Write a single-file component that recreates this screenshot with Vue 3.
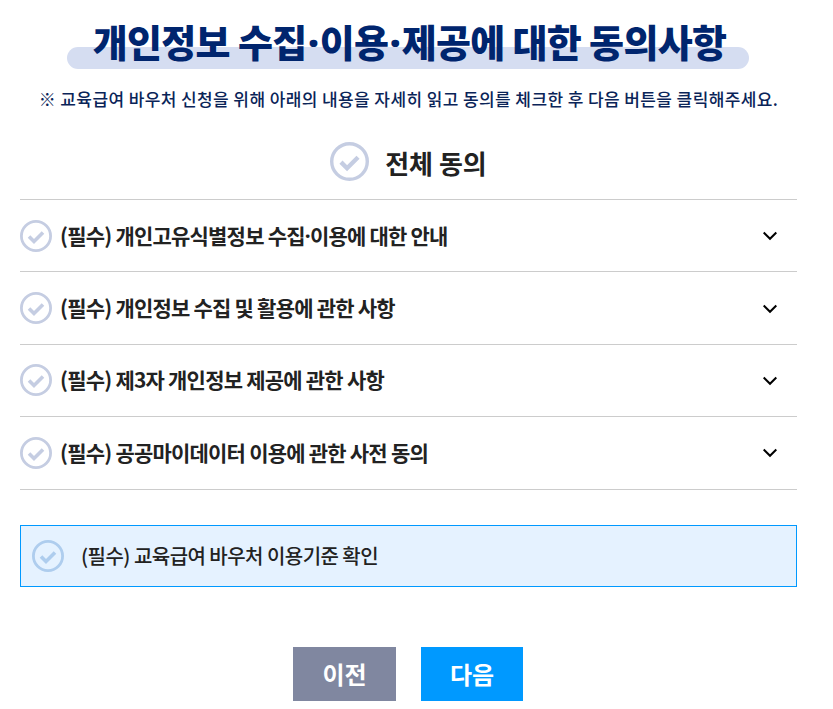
<template>
  <div class="page">
    <div class="head">
      <h1 class="title">
        <span class="title-text">개인정보 수집<i class="dot">·</i>이용<i class="dot">·</i>제공에 대한 동의사항</span>
      </h1>
      <p class="notice">※ 교육급여 바우처 신청을 위해 아래의 내용을 자세히 읽고 동의를 체크한 후 다음 버튼을 클릭해주세요.</p>
    </div>

    <div class="all-agree">
      <svg class="check check-all" viewBox="0 0 32 32">
        <circle cx="16" cy="16" r="14.6" fill="none" stroke="#c5cde2" stroke-width="2.8" />
        <path d="M9 16.5l5 5 9-9" fill="none" stroke="#c5cde2" stroke-width="3.6" />
      </svg>
      <span class="all-text">전체 동의</span>
    </div>

    <ul class="terms">
      <li v-for="item in terms" :key="item.text" class="term">
        <svg class="check" viewBox="0 0 32 32">
          <circle cx="16" cy="16" r="14.6" fill="none" stroke="#c5cde2" stroke-width="2.8" />
          <path d="M9 16.5l5 5 9-9" fill="none" stroke="#c5cde2" stroke-width="3.6" />
        </svg>
        <span class="term-text">{{ item.text }}<template v-if="item.rest"><i class="dot">·</i>{{ item.rest }}</template></span>
        <svg class="arrow" viewBox="0 0 14 10">
          <path d="M.7 1.5l6.3 6.3 6.3-6.3" fill="none" stroke="#000" stroke-width="2" />
        </svg>
      </li>
    </ul>

    <div class="confirm">
      <svg class="check" viewBox="0 0 32 32">
        <circle cx="16" cy="16" r="14.6" fill="none" stroke="#aecdee" stroke-width="2.8" />
        <path d="M9 16.5l5 5 9-9" fill="none" stroke="#aecdee" stroke-width="3.6" />
      </svg>
      <span class="confirm-text">(필수) 교육급여 바우처 이용기준 확인</span>
    </div>

    <div class="buttons">
      <button class="btn prev">이전</button>
      <button class="btn next">다음</button>
    </div>
  </div>
</template>

<script setup>
const terms = [
  { text: '(필수) 개인고유식별정보 수집', rest: '이용에 대한 안내' },
  { text: '(필수) 개인정보 수집 및 활용에 관한 사항' },
  { text: '(필수) 제3자 개인정보 제공에 관한 사항' },
  { text: '(필수) 공공마이데이터 이용에 관한 사전 동의' }
]
</script>

<style>
html, body {
  background: #fff;
}
</style>

<style scoped>
.page {
  width: 777px;
  margin-left: 20px;
  font-family: "Noto Sans CJK KR", "Noto Sans", sans-serif;
  color: #222;
}

.head {
  text-align: center;
}

.title {
  position: relative;
  margin: 0 0 0 47px;
  width: 682px;
  height: 69px;
  font-size: 38px;
  font-weight: 900;
  line-height: 40px;
  padding: 21px 0 0 3px;
  box-sizing: border-box;
  color: #00256e;
  letter-spacing: -0.68px;
  white-space: nowrap;
}

/* highlight bar behind the title */
.title::before {
  content: "";
  position: absolute;
  left: 0;
  right: 0;
  top: 47px;
  height: 22px;
  border-radius: 11px;
  background: #d5ddf1;
}

.title-text {
  position: relative;
}

.dot {
  font-style: normal;
  font-family: "Noto Sans", sans-serif;
}

.title .dot {
  margin: 0 1.5px;
}

.notice {
  margin: 18px 0 0;
  font-size: 17px;
  font-weight: 500;
  line-height: 24px;
  letter-spacing: 0.4px;
  color: #0a2458;
  white-space: nowrap;
}

.all-agree {
  display: flex;
  align-items: center;
  justify-content: center;
  gap: 16px;
  height: 89px;
  padding-top: 12px;
  font-size: 26px;
  font-weight: 700;
  border-bottom: 1px solid #ccc;
  box-sizing: border-box;
}

.all-text {
  margin-top: 3px;
}

.check {
  width: 32px;
  height: 32px;
  flex: none;
}

.check-all {
  width: 39px;
  height: 39px;
}

.terms {
  list-style: none;
  margin: 0;
  padding: 0;
}

.term {
  display: flex;
  align-items: center;
  gap: 8px;
  height: 72.4px;
  box-sizing: border-box;
  border-bottom: 1px solid #ccc;
  font-size: 21px;
  font-weight: 700;
  letter-spacing: -0.78px;
}

.term-text {
  flex: 1;
  margin-top: -2px;
}

.arrow {
  width: 14px;
  height: 10px;
  margin: 1px 20px 0 0;
}

.confirm {
  display: flex;
  align-items: center;
  gap: 17px;
  height: 62px;
  margin-top: 35.4px;
  padding-left: 11px;
  box-sizing: border-box;
  border: 1px solid #0099ff;
  background: #e5f2ff;
  font-size: 20px;
  font-weight: 500;
  letter-spacing: -0.53px;
}

.confirm-text {
  margin-top: -1px;
}

.buttons {
  display: flex;
  justify-content: center;
  gap: 25px;
  margin-top: 60px;
  padding-right: 1px;
}

.btn {
  width: 103px;
  height: 54px;
  border: 0;
  color: #fff;
  font-family: inherit;
  font-size: 24px;
  font-weight: 700;
}

.prev {
  background: #8087a0;
}

.next {
  width: 102px;
  background: #0099ff;
}
</style>
